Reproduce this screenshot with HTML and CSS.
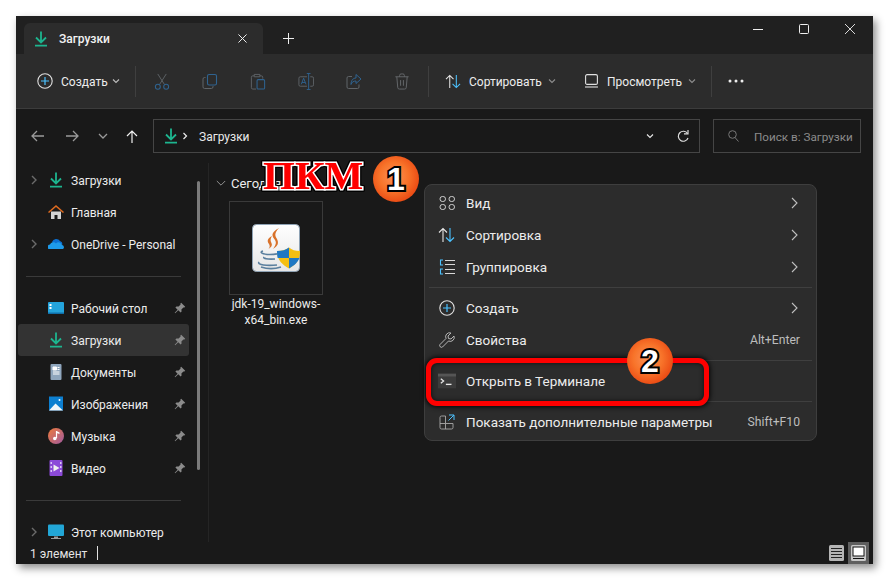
FILE: index.html
```html
<!DOCTYPE html>
<html lang="ru">
<head>
<meta charset="utf-8">
<title>Загрузки</title>
<link rel="stylesheet" href="styles.css">
</head>
<body>
<svg class="defs" width="0" height="0" aria-hidden="true">
  <defs>
    <symbol id="dl" viewBox="0 0 14 16"><path d="M7 0.5V11M2 6.5l5 5 5-5M1 14.7h12" fill="none" stroke="#1db58f" stroke-width="1.8"/></symbol>
    <symbol id="pin" viewBox="0 0 12 12"><path d="M7.2 .8l4 4-.8.8-1-.2-2 2 .2 2.2-1 1-2.3-2.3L1.2 11.3l-.5-.5 2.9-3.1L1.4 5.4l1-1 2.2.2 2-2-.2-1z" fill="#8b8b8b"/></symbol>
    <symbol id="chev" viewBox="0 0 10 10"><path d="M2 3.5l3 3 3-3" fill="none" stroke="currentColor" stroke-width="1.1"/></symbol>
    <symbol id="sortic" viewBox="0 0 18 16"><path d="M5 15V1.5M1 5.5l4-4 4 4" fill="none" stroke="#e6e6e6" stroke-width="1.1"/><path d="M12 1v13.5M8 10.5l4 4 4-4" fill="none" stroke="#4cc2ff" stroke-width="1.1"/></symbol>
    <symbol id="plusc" viewBox="0 0 16 16"><circle cx="8" cy="8" r="7.2" fill="none" stroke="#e0e0e0" stroke-width="1.1"/><path d="M8 4v8M4 8h8" stroke="#4cc2ff" stroke-width="1.2"/></symbol>
  </defs>
</svg>
<main class="window">
  <header class="titlebar">
    <div class="tab">
      <svg class="ic-dl"><use href="#dl"/></svg>
      <span class="tab-label">Загрузки</span>
      <svg class="tab-close" viewBox="0 0 10 10"><path d="M.5.5l9 9M9.500.5l-9 9" stroke="#f0f0f0" stroke-width="1.1"/></svg>
    </div>
    <svg class="tab-new" viewBox="0 0 11 11"><path d="M5.500 0v11M0 5.500h11" stroke="#eee" stroke-width="1"/></svg>
    <div class="caption">
      <svg viewBox="0 0 10 10" class="cap-ic"><path d="M0 5.500h10" stroke="#eee" stroke-width="1"/></svg>
      <svg viewBox="0 0 10 10" class="cap-ic"><rect x=".5" y=".5" width="9" height="9" rx="1" fill="none" stroke="#eee"/></svg>
      <svg viewBox="0 0 10 10" class="cap-ic"><path d="M0 0l10 10M10 0L0 10" stroke="#eee" stroke-width=".9"/></svg>
    </div>
  </header>

  <div class="toolbar">
    <button class="tb-btn tb-new"><svg class="ic16"><use href="#plusc"/></svg><span>Создать</span><svg class="chev"><use href="#chev"/></svg></button>
    <i class="tb-sep"></i>
    <div class="tb-icons">
      <svg viewBox="0 0 16 18"><path d="M3.500 1l7 11M12.500 1l-7 11" fill="none" stroke="#5f6468" stroke-width="1"/><circle cx="3.600" cy="14.500" r="2.600" fill="none" stroke="#2f6390" stroke-width="1.100"/><circle cx="12.400" cy="14.500" r="2.600" fill="none" stroke="#2f6390" stroke-width="1.100"/></svg>
      <svg viewBox="0 0 16 16"><path d="M3.500 4H2.600A1.600 1.600 0 0 0 1 5.600v7.800A1.600 1.600 0 0 0 2.600 15h6.800A1.600 1.600 0 0 0 11 13.400V12.500" fill="none" stroke="#5f6468"/><rect x="5.500" y="1" width="9" height="10.500" rx="1.600" fill="none" stroke="#2f6390" stroke-width="1.100"/></svg>
      <svg viewBox="0 0 16 18"><path d="M4 3H2.500A1.500 1.500 0 0 0 1 4.500v11A1.500 1.500 0 0 0 2.500 17H6M10 3h1.500A1.500 1.500 0 0 1 13 4.500V6M4 1.500h6V4H4z" fill="none" stroke="#5f6468"/><rect x="7" y="7" width="8" height="10" rx="1.200" fill="none" stroke="#2f6390" stroke-width="1.100"/></svg>
      <svg viewBox="0 0 16 18"><path d="M9 4H2A1.500 1.500 0 0 0 .5 5.500v7A1.500 1.500 0 0 0 2 14h7M12.500 4h2A1.500 1.500 0 0 1 16 5.500v7a1.500 1.500 0 0 1-1.500 1.500h-2" fill="none" stroke="#5f6468"/><path d="M10.800 .5v17M8.800 .5h4M8.800 17.500h4" fill="none" stroke="#2f6390"/><path d="M3 12l2.500-6.500L8 12M3.800 10h3.400" fill="none" stroke="#2f6390"/></svg>
      <svg viewBox="0 0 16 16"><path d="M6 3H2.500A1.500 1.500 0 0 0 1 4.500v9A1.500 1.500 0 0 0 2.500 15h9a1.500 1.500 0 0 0 1.500-1.500V11" fill="none" stroke="#5f6468"/><path d="M10 1l5 4.500L10 10V7.500C7.500 7.500 6 8.500 5 11c0-4 2-6.500 5-6.500z" fill="none" stroke="#2f6390"/></svg>
      <svg viewBox="0 0 16 18"><path d="M1 4h14M5.500 4V2.500A1.500 1.500 0 0 1 7 1h2a1.500 1.500 0 0 1 1.500 1.500V4M2.500 4l1 11.500A1.700 1.700 0 0 0 5.200 17h5.600a1.700 1.700 0 0 0 1.700-1.500l1-11.500M6.500 7.500v6M9.500 7.500v6" fill="none" stroke="#66696c"/></svg>
    </div>
    <i class="tb-sep"></i>
    <button class="tb-btn tb-sort"><svg class="ic-sort"><use href="#sortic"/></svg><span>Сортировать</span><svg class="chev chev-dim"><use href="#chev"/></svg></button>
    <button class="tb-btn tb-view"><svg class="ic-view" viewBox="0 0 13 14"><rect x=".6" y=".6" width="11.800" height="9.800" rx="1.500" fill="none" stroke="#e0e0e0" stroke-width="1.100"/><path d="M0 13h13" stroke="#e0e0e0" stroke-width="1.100"/></svg><span>Просмотреть</span><svg class="chev chev-dim"><use href="#chev"/></svg></button>
    <i class="tb-sep"></i>
    <svg class="tb-more" viewBox="0 0 16 4"><circle cx="2" cy="2" r="1.500" fill="#eee"/><circle cx="8" cy="2" r="1.500" fill="#eee"/><circle cx="14" cy="2" r="1.500" fill="#eee"/></svg>
  </div>

  <div class="navrow">
    <svg class="nav nav-back" viewBox="0 0 13 12"><path d="M13 6H1M6 1L1 6l5 5" fill="none" stroke="#9a9a9a" stroke-width="1.300"/></svg>
    <svg class="nav nav-fwd" viewBox="0 0 13 12"><path d="M0 6h12M7 1l5 5-5 5" fill="none" stroke="#9a9a9a" stroke-width="1.300"/></svg>
    <svg class="nav nav-down" viewBox="0 0 10 10"><path d="M1 3l4 4 4-4" fill="none" stroke="#9a9a9a" stroke-width="1.300"/></svg>
    <svg class="nav nav-up" viewBox="0 0 12 13"><path d="M6 13V1M1 6l5-5 5 5" fill="none" stroke="#f0f0f0" stroke-width="1.200"/></svg>
    <div class="addr">
      <svg class="ic-dl"><use href="#dl"/></svg>
      <svg class="addr-sep" viewBox="0 0 6 8"><path d="M1.500 1l3 3-3 3" fill="none" stroke="#eee" stroke-width="1.200"/></svg>
      <span class="addr-text">Загрузки</span>
      <svg class="addr-chev"><use href="#chev"/></svg>
      <svg class="addr-ref" viewBox="0 0 12 13"><path d="M10.500 3.500A5 5 0 1 0 11 8" fill="none" stroke="#ddd" stroke-width="1.200"/><path d="M7 3.800h4V0" fill="none" stroke="#ddd" stroke-width="1.200"/></svg>
    </div>
    <div class="search">
      <svg class="search-ic" viewBox="0 0 11 12"><circle cx="4.500" cy="4.500" r="3.800" fill="none" stroke="#777"/><path d="M7 7.500l3.500 4" stroke="#777"/></svg>
      <span>Поиск в: Загрузки</span>
    </div>
  </div>

  <div class="body">
    <nav class="side">
      <div class="side-row"><svg class="exp" viewBox="0 0 6 10"><path d="M1 1l4 4-4 4" fill="none" stroke="#6b6b6b" stroke-width="1.400"/></svg><svg class="ic-dl"><use href="#dl"/></svg><span>Загрузки</span></div>
      <div class="side-row"><i class="exp"></i><svg class="side-ic" viewBox="0 0 16 14"><path d="M3 6.500h10V14H9.500v-4h-3v4H3z" fill="#d4d4d4"/><path d="M0 7l8-7 8 7-1 1-7-6-7 6z" fill="#de6a1f"/></svg><span>Главная</span></div>
      <div class="side-row"><svg class="exp" viewBox="0 0 6 10"><path d="M1 1l4 4-4 4" fill="none" stroke="#6b6b6b" stroke-width="1.400"/></svg><svg class="side-ic" viewBox="0 0 16 11"><path d="M4 3.500A4.500 4.500 0 0 1 12 2.500 3.500 3.500 0 0 1 14.500 6L7 7z" fill="#0c6fd0"/><path d="M.5 10.500A2.500 2.500 0 0 1 2 6a3.500 3.500 0 0 1 6-1 3.500 3.500 0 0 1 6 1.500 2.200 2.200 0 0 1 1 4z" fill="#1e9bea"/></svg><span>OneDrive - Personal</span></div>
      <hr class="side-div">
      <div class="side-row"><i class="exp"></i><svg class="side-ic" viewBox="0 0 16 12"><rect width="16" height="12" rx="1" fill="#24a4dc"/><rect y="10.500" width="16" height="1.500" fill="#0f6ea8"/><rect x="1.500" y="2" width="2" height="2" fill="#fff"/><rect x="1.500" y="5" width="2" height="2" fill="#fff"/></svg><span>Рабочий стол</span><svg class="pin"><use href="#pin"/></svg></div>
      <div class="side-row side-sel"><i class="exp"></i><svg class="ic-dl"><use href="#dl"/></svg><span>Загрузки</span><svg class="pin"><use href="#pin"/></svg></div>
      <div class="side-row"><i class="exp"></i><svg class="side-ic" viewBox="0 0 16 16"><rect x="2.500" width="11" height="16" rx="1" fill="#8fa6bd"/><path d="M5 3h3.500v3H5zM9.500 3.500h2M9.500 5.500h2M5 8h6.500M5 10h6.500" stroke="#fff" fill="#fff"/></svg><span>Документы</span><svg class="pin"><use href="#pin"/></svg></div>
      <div class="side-row"><i class="exp"></i><svg class="side-ic" viewBox="0 0 16 15"><rect x="1" width="14" height="14" fill="#0d7fd0"/><path d="M1 14l6.500-7 7.500 7z" fill="#f2f6f9"/><circle cx="11.500" cy="3.500" r="1" fill="#fff"/></svg><span>Изображения</span><svg class="pin"><use href="#pin"/></svg></div>
      <div class="side-row"><i class="exp"></i><svg class="side-ic" viewBox="0 0 16 16"><defs><linearGradient id="mus" x1="0" y1="0" x2="1" y2="1"><stop offset="0" stop-color="#ee7a3a"/><stop offset="1" stop-color="#a05aa0"/></linearGradient></defs><circle cx="8" cy="8" r="8" fill="url(#mus)"/><path d="M8.500 3v7" stroke="#fff" stroke-width="1.200"/><path d="M8.500 3l3 1.500v1.500L8.500 5z" fill="#fff"/><circle cx="6.800" cy="10.500" r="1.800" fill="#fff"/></svg><span>Музыка</span><svg class="pin"><use href="#pin"/></svg></div>
      <div class="side-row"><i class="exp"></i><svg class="side-ic" viewBox="0 0 16 16"><rect x="1.500" width="13" height="16" rx="1" fill="#8b49d8"/><path d="M5.500 4.500l6 3.500-6 3.500z" fill="#eee"/><path d="M2.500 2h1.500v2H2.500zM2.500 6h1.500v2H2.500zM2.500 10h1.500v2H2.500zM12 2h1.500v2H12zM12 6h1.500v2H12zM12 10h1.500v2H12z" fill="#d9c3f5"/></svg><span>Видео</span><svg class="pin"><use href="#pin"/></svg></div>
      <hr class="side-div">
      <div class="side-row"><svg class="exp" viewBox="0 0 6 10"><path d="M1 1l4 4-4 4" fill="none" stroke="#6b6b6b" stroke-width="1.400"/></svg><svg class="side-ic" viewBox="0 0 16 15"><rect width="16" height="11.500" rx="1" fill="#22a6d6"/><path d="M6 12h4v1.500h3v1H3v-1h3z" fill="#9a9a9a"/></svg><span>Этот компьютер</span></div>
      <i class="side-thumb"></i>
    </nav>
    <section class="files">
      <div class="group"><svg class="group-chev" viewBox="0 0 12 8"><path d="M1 1l5 5 5-5" fill="none" stroke="#aaa" stroke-width="1"/></svg><span>Сегодня</span></div>
      <figure class="file">
        <div class="thumb">
          <svg viewBox="0 0 48 48" class="java">
            <defs><linearGradient id="jbg" x1="0" y1="0" x2="0" y2="1"><stop offset="0" stop-color="#fff"/><stop offset="1" stop-color="#e6e6e6"/></linearGradient></defs>
            <rect x=".5" y=".5" width="47" height="47" rx="4" fill="url(#jbg)" stroke="#8fa3b5"/>
            <path d="M27 4c-9 5-7 8-4 12 2 3 0 6-2 9 5-3 6-6 4-10-2-3-3-6 2-11zM20 12c-5 3-5 5-3 8 1 2 1 3-.5 5 3-2 4-3.500 3-6-1-2-1.500-3.500.5-7z" fill="#d9722a"/>
            <path d="M11 27c-4 1-1 3.500 7 3.500 3 0 5-.3 7-.7M12 33c-1 1.500 3 2.500 11 2M7 38c-2 3 8 4 18 3M9 43c6 2 14 2 20 0" fill="none" stroke="#5a7f9e" stroke-width="1.700"/>
            <path d="M25 27c5 0 9-1 12-3.500 3 2.500 6 3.500 11 3.500 0 8-3 13-11 17.500-8-4.500-12-9.500-12-17.500z" fill="#f5bf12"/>
            <path d="M37 23.500V34H25.600c-.4-2-.6-4.500-.6-7 5 0 9-1 12-3.500zM37 34h10.400c-1.500 4.300-4.800 7.300-10.400 10.500z" fill="#1f78c4"/>
          </svg>
        </div>
        <figcaption>jdk-19_windows-<br>x64_bin.exe</figcaption>
      </figure>
    </section>
  </div>

  <footer class="status">
    <span>1 элемент</span><i class="status-sep"></i>
    <div class="status-views">
      <span class="vbtn"><svg viewBox="0 0 15 16" class="vic"><rect width="15" height="16" rx="1.500" fill="#b5b5b5"/><path d="M2 3.500h11M2 6.500h11M2 9.500h11M2 12.500h11" stroke="#222"/></svg></span>
      <span class="vbtn vbtn-on"><svg viewBox="0 0 15 16" class="vic"><rect width="15" height="16" rx="1.500" fill="#c8c8c8"/><rect x="2" y="2" width="11" height="9" fill="#fff" stroke="#111"/><path d="M2 13.500h11" stroke="#111"/></svg></span>
    </div>
  </footer>

  <div class="menu">
    <div class="m-row"><svg class="m-ic" viewBox="0 0 16 16"><g fill="none" stroke="#d0d0d0"><rect x="1" y="1.500" width="5.500" height="5" rx="2.400"/><rect x="10" y="1.500" width="5.500" height="5" rx="2.400"/><rect x="1" y="9.500" width="5.500" height="5" rx="2.400"/><rect x="10" y="9.500" width="5.500" height="5" rx="2.400"/></g></svg><span>Вид</span><svg class="m-arrow" viewBox="0 0 7 12"><path d="M1 1l5 5-5 5" fill="none" stroke="#c0c0c0" stroke-width="1.100"/></svg></div>
    <div class="m-row"><svg class="m-ic"><use href="#sortic"/></svg><span>Сортировка</span><svg class="m-arrow" viewBox="0 0 7 12"><path d="M1 1l5 5-5 5" fill="none" stroke="#c0c0c0" stroke-width="1.100"/></svg></div>
    <div class="m-row"><svg class="m-ic" viewBox="0 0 16 16"><path d="M6 1.500h10M6 5.500h10M6 10.500h10M6 14.500h10" stroke="#d8d8d8"/><path d="M4 1H1.500v5H4M4 10H1.500v5H4" fill="none" stroke="#4cc2ff" stroke-width="1.100"/></svg><span>Группировка</span><svg class="m-arrow" viewBox="0 0 7 12"><path d="M1 1l5 5-5 5" fill="none" stroke="#c0c0c0" stroke-width="1.100"/></svg></div>
    <hr class="m-div">
    <div class="m-row"><svg class="m-ic"><use href="#plusc"/></svg><span>Создать</span><svg class="m-arrow" viewBox="0 0 7 12"><path d="M1 1l5 5-5 5" fill="none" stroke="#c0c0c0" stroke-width="1.100"/></svg></div>
    <div class="m-row"><svg class="m-ic" viewBox="0 0 16 16"><path d="M15 4l-3 3-2.500-.5L9 4l3-3a4 4 0 0 0-5 5.500L1 12.500a1.800 1.800 0 0 0 2.500 2.500L9.500 9A4 4 0 0 0 15 4z" fill="none" stroke="#c4c4c4" stroke-width=".9"/></svg><span>Свойства</span><kbd>Alt+Enter</kbd></div>
    <hr class="m-div">
    <div class="m-row"><svg class="m-ic" viewBox="0 0 16 14"><rect y=".5" width="16" height="13" fill="#3b3b3b"/><rect y=".5" width="16" height="2.500" fill="#555"/><path d="M2.500 5l2.500 2-2.500 2" fill="none" stroke="#e8e8e8" stroke-width="1.100"/><path d="M7 10h5" stroke="#e8e8e8" stroke-width="1.200"/></svg><span>Открыть в Терминале</span></div>
    <hr class="m-div">
    <div class="m-row"><svg class="m-ic" viewBox="0 0 16 16"><path d="M6.500 2H2.500A1.500 1.500 0 0 0 1 3.500v10A1.500 1.500 0 0 0 2.500 15h10a1.500 1.500 0 0 0 1.500-1.500V9.500H6.500V2M1 9.500h5.500V15" fill="none" stroke="#a8a8a8" stroke-width=".9"/><path d="M10 1h5v5M15 1L9.500 6.500" fill="none" stroke="#4cc2ff" stroke-width="1"/></svg><span>Показать дополнительные параметры</span><kbd>Shift+F10</kbd></div>
  </div>
</main>

<div class="mark-box"></div>
<div class="mark-text">ПКМ</div>
<div class="badge badge-1">1</div>
<div class="badge badge-2">2</div>
</body>
</html>
```
FILE: styles.css
```css
* { box-sizing: border-box; }
html, body { margin: 0; height: 100%; overflow: hidden; }
body { background: #fff; font: 12px Roboto, "Noto Sans", sans-serif; color: #ececec; position: relative; }
.defs { position: absolute; }
svg { display: block; flex: none; }
button { all: unset; display: flex; align-items: center; }
.window {
  position: relative; margin: 16px 0 0 16px; width: 857px; height: 548px;
  background: #191919; display: flex; flex-direction: column;
  box-shadow: 3px 4px 8px rgba(0,0,0,.45);
}
.ic-dl { width: 14px; height: 16px; }

.titlebar { height: 38px; background: #202020; display: flex; align-items: flex-end; padding-left: 8px; flex: none; }
.tab { width: 239px; height: 31px; background: #2c2c2c; border-radius: 6px 6px 0 0; display: flex; align-items: center; padding: 0 16px 0 10px; color: #f2f2f2; }
.tab-label { margin-left: 11px; flex: 1; font-weight: 500; padding-top: 1px; }
.tab-close { width: 9px; height: 9px; }
.tab-new { width: 11px; height: 11px; margin: 0 0 10px 20px; }
.caption { margin-left: auto; align-self: flex-start; display: flex; gap: 36px; padding-right: 18px; }
.cap-ic { width: 10px; height: 10px; margin-top: 8px; }

.toolbar { height: 55px; background: #2c2c2c; border-bottom: 1px solid #3c3c3c; display: flex; align-items: center; padding-left: 21px; flex: none; color: #ededed; }
.ic16 { width: 16px; height: 16px; }
.chev { width: 10px; height: 10px; color: #bdbdbd; }
.chev-dim { color: #8d8d8d; }
.tb-btn span { white-space: nowrap; padding-top: 2px; }
.tb-new { width: 98px; }
.tb-new span { margin: 0 3px 0 8px; }
.tb-sep { width: 1px; height: 31px; background: #3f3f3f; flex: none; }
.tb-icons { width: 292px; display: flex; align-items: center; justify-content: space-between; padding: 0 18px 0 18px; }
.tb-icons svg { width: 16px; height: 17px; }
.tb-sort { margin-left: 16px; width: 124px; }
.ic-sort { width: 17px; height: 15px; }
.tb-sort span { margin: 0 5px 0 7px; }
.tb-view { margin-left: 16px; width: 126px; }
.ic-view { width: 13px; height: 14px; }
.tb-view span { margin: 0 5px 0 9px; }
.tb-more { width: 16px; height: 4px; margin-left: 16px; }

.navrow { height: 54px; display: flex; align-items: center; padding: 0 12px 0 15px; flex: none; }
.nav-back { width: 13px; height: 12px; }
.nav-fwd { width: 13px; height: 12px; margin-left: 22px; }
.nav-down { width: 10px; height: 10px; margin-left: 19px; }
.nav-up { width: 12px; height: 13px; margin-left: 18px; }
.addr { margin-left: 15px; width: 547px; height: 34px; border: 1px solid #454545; display: flex; align-items: center; padding: 0 10px; color: #eaeaea; }
.addr-sep { width: 6px; height: 8px; margin: 0 11px 0 4px; }
.addr-text { flex: 1; padding-top: 1px; }
.addr-chev { width: 10px; height: 10px; margin-right: 22px; }
.addr-ref { width: 12px; height: 13px; }
.search { margin-left: 13px; width: 148px; height: 34px; border: 1px solid #454545; display: flex; align-items: center; padding-left: 14px; color: #8b8b8b; gap: 15px; font-size: 11.7px; }
.search span { padding-top: 1px; }
.search-ic { width: 11px; height: 12px; }

.body { flex: 1; display: flex; min-height: 0; }
.side { width: 193px; padding-top: 1px; position: relative; flex: none; }
.side-row { height: 32px; display: flex; align-items: center; padding-left: 13px; margin: 0 20px 0 2px; border-radius: 3px; position: relative; }
.side-row > span { margin-left: 8px; white-space: nowrap; padding-top: 1px; }
.exp { width: 6px; height: 10px; display: block; margin-right: 12px; flex: none; }
.side-ic { width: 16px; height: 16px; margin-left: -1px; margin-right: -1px; }
.side-sel { background: #333; }
.pin { position: absolute; right: 3px; top: 10px; width: 12px; height: 12px; }
.side-div { border: 0; height: 1px; background: #3a3a3a; margin: 16px 28px 15px 10px; }
.side-thumb { position: absolute; left: 181px; top: 18px; width: 3px; height: 289px; background: #7b7b7b; border-radius: 2px; }
.files { flex: 1; border-left: 1px solid #252525; margin-left: -1px; position: relative; }
.group { display: flex; align-items: center; height: 20px; margin: 10px 0 0 7px; color: #ececec; font-size: 13px; }
.group-chev { width: 10px; height: 7px; margin-right: 5px; }
.file { margin: 8px 0 0 20px; width: 94px; }
.thumb { width: 94px; height: 94px; border: 1px solid #3a3a3a; display: flex; align-items: center; justify-content: center; }
.java { width: 48px; height: 48px; }
figcaption { margin: 1px -10px 0; text-align: center; line-height: 16px; }

.status { height: 22px; flex: none; display: flex; align-items: center; padding-left: 14px; color: #e4e4e4; }
.status > span { padding-top: 2px; }
.status-sep { width: 1px; height: 14px; background: #e0e0e0; margin-left: 10px; }
.status-views { margin-left: auto; display: flex; align-items: center; gap: 4px; padding-right: 4px; }
.vbtn { display: flex; }
.vic { width: 15px; height: 16px; }
.vbtn-on { background: #5f5f5f; padding: 3px; }

.menu { position: absolute; left: 408px; top: 168px; width: 393px; height: 257px; background: #2c2c2c; border: 1px solid #3e3e3e; border-radius: 8px; padding: 2px 0; color: #ececec; font-size: 13.5px; }
.m-row { height: 32px; display: flex; align-items: center; padding: 0 16px 0 13px; }
.m-ic { width: 18px; height: 16px; margin-right: 10px; }
.m-row span { flex: 1; }
.m-arrow { width: 7px; height: 12px; margin-right: 2px; }
kbd { font: inherit; font-size: 12.2px; color: #bdbdbd; }
.m-div { border: 0; height: 1px; background: #3f3f3f; margin: 4px 4px; }

.mark-box { position: absolute; left: 426px; top: 358px; width: 283px; height: 48px; border: 5px solid #f00; border-radius: 11px; box-shadow: 0 0 5px 1px rgba(0,0,0,.9), inset 0 0 5px rgba(0,0,0,.7); }
.mark-text { position: absolute; left: 263px; top: 151px; font: bold 41px/48px "Liberation Serif", serif; color: #f00; -webkit-text-stroke: 3px #fff; paint-order: stroke fill; filter: drop-shadow(1px 0 0 #000) drop-shadow(-1px 0 0 #000) drop-shadow(0 1px 0 #000) drop-shadow(0 -1px 0 #000); }
.badge { position: absolute; width: 46px; height: 46px; border-radius: 50%; background: radial-gradient(circle at 45% 45%, #fb9058 0, #f8742a 40%, #e8420f 80%, #c7290a 100%); display: flex; align-items: center; justify-content: center; font: bold 32px "Liberation Sans", sans-serif; color: #fff; -webkit-text-stroke: 4px #000; paint-order: stroke fill; }
.badge-1 { left: 373px; top: 156px; }
.badge-2 { left: 627px; top: 338px; }
```
